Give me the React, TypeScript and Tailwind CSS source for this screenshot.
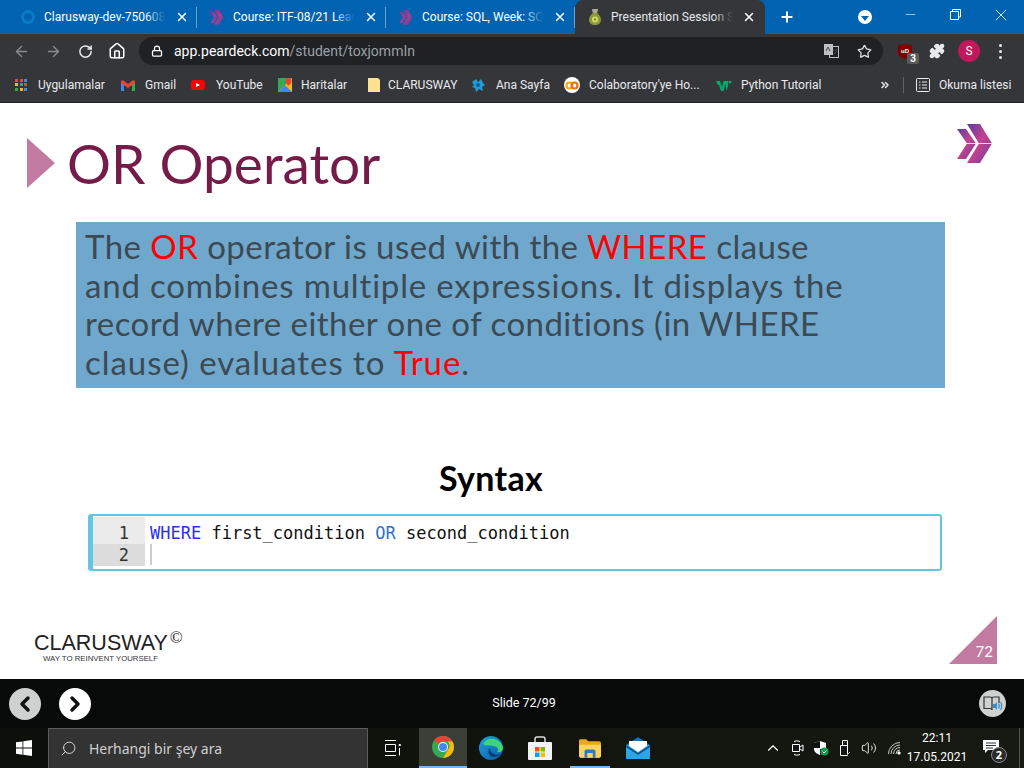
import React from 'react'
import {
  ArrowLeft,
  ArrowRight,
  RotateCw,
  Home,
  Lock,
  Star,
  Puzzle,
  X,
  Plus,
  Minus,
  ChevronLeft,
  ChevronRight,
  ChevronUp,
  ChevronsRight,
  Search,
  Volume2,
} from 'lucide-react'

const UI = { fontFamily: 'Roboto, "Open Sans", sans-serif' }
const SEGOE = { fontFamily: '"Noto Sans", "Open Sans", sans-serif' }
const SLIDE = { fontFamily: 'Lato, "Noto Sans", sans-serif' }
const LOGO = { fontFamily: '"Liberation Sans", sans-serif' }

// the two chevrons of the course logo, a white hairline runs through the middle
const Chevrons = ({ width, height, id, muted }: { width: number; height: number; id: string; muted?: boolean }) => (
  <svg width={width} height={height} viewBox="0 0 36 40">
    <defs>
      <linearGradient id={id} x1="0" y1="0" x2="1" y2="1">
        <stop offset="0" stopColor={muted ? '#6f3f9a' : '#5b3f9e'} />
        <stop offset="0.5" stopColor={muted ? '#a33f92' : '#c6408f'} />
        <stop offset="1" stopColor={muted ? '#6f3f9a' : '#6a3fa0'} />
      </linearGradient>
    </defs>
    <path d="M0 5h9l10 14.500L9 35H0l10-15.500z" fill={`url(#${id})`} />
    <path d="M10 0h13l12 19.500L23 39H10l12-19.500z" fill={`url(#${id})`} />
    {!muted && <path d="M2 19.500h33" stroke="white" strokeWidth="0.8" />}
  </svg>
)

const Tab = ({ icon, title }: { icon: React.ReactNode; title: string }) => (
  <div className="flex items-center w-[189px] h-[34px] pl-[13px] shrink-0 border-r border-[#5d93c4] [border-image:linear-gradient(transparent_22%,#6f9fcc_22%,#6f9fcc_80%,transparent_80%)_1]">
    <div className="flex items-center w-[23px] shrink-0">{icon}</div>
    <div className="relative w-[121px] overflow-hidden whitespace-nowrap text-[12px] text-white">
      {title}
      <div className="absolute right-0 top-0 bottom-0 w-5 bg-gradient-to-r from-transparent to-[#0063b1]" />
    </div>
    <X size={14} strokeWidth={2.5} className="ml-[10px] text-white shrink-0" />
  </div>
)

const TabStrip = () => (
  <div className="flex items-end h-[34px] bg-[#0063b1] pl-[8px] shrink-0" style={UI}>
    <Tab
      title="Clarusway-dev-750608"
      icon={<span className="w-[14px] h-[14px] rounded-full border-[3px] border-[#0a7cc4]" />}
    />
    <Tab title="Course: ITF-08/21 Learn" icon={<Chevrons id="t1" width={14} height={15} muted />} />
    <Tab title="Course: SQL, Week: SQL" icon={<Chevrons id="t2" width={14} height={15} muted />} />
    <div className="flex items-center w-[190px] h-[34px] bg-[#35363a] rounded-t-lg pl-[14px] shrink-0">
      <svg width="12" height="16" viewBox="0 0 12 16" className="shrink-0">
        <path d="M3 0h6L8 4c2 1.500 4 4 4 7 0 3-2.500 5-6 5s-6-2-6-5c0-3 2-5.500 4-7z" fill="#8d9a3a" />
        <path d="M3 0h6L8 4H4z" fill="#a8a89a" />
        <circle cx="6" cy="10.500" r="3" fill="#d8dc62" />
        <circle cx="6" cy="10.500" r="1" fill="#5c6424" />
      </svg>
      <div className="relative w-[122px] ml-[10px] overflow-hidden whitespace-nowrap text-[12px] text-[#e8eaed]">
        Presentation Session Student
        <div className="absolute right-0 top-0 bottom-0 w-5 bg-gradient-to-r from-transparent to-[#35363a]" />
      </div>
      <X size={14} strokeWidth={2.5} className="ml-[9px] text-white shrink-0" />
    </div>
    <div className="flex items-center h-[34px] flex-1">
      <Plus size={16} strokeWidth={3} className="ml-[14px] text-white" />
      <div className="flex items-center justify-center w-[14px] h-[14px] rounded-full bg-white ml-[63px]">
        <span className="w-0 h-0 mt-[2px] border-x-[4px] border-x-transparent border-t-[5px] border-t-[#0063b1]" />
      </div>
      <Minus size={15} strokeWidth={1} className="ml-[31px] -mt-[5px] text-white" />
      <svg width="11" height="11" viewBox="0 0 11 11" className="ml-[32px] -mt-[5px] text-white" fill="none" stroke="currentColor">
        <path d="M.5 2.500h8v8h-8zM2.500 2V.5h8V8H9" />
      </svg>
      <X size={20} strokeWidth={1} className="ml-[30px] -mt-[5px] text-white" />
    </div>
  </div>
)

const Toolbar = () => (
  <div className="flex items-center h-[34px] bg-[#35363a] shrink-0">
    <ArrowLeft size={17} className="ml-[13px] text-[#8a8b8d]" />
    <ArrowRight size={17} className="ml-[15px] text-[#8a8b8d]" />
    <RotateCw size={15} strokeWidth={2.4} className="ml-[16px] text-[#e8eaed]" />
    <Home size={18} strokeWidth={2} className="ml-[15px] text-white" />
    <div className="flex items-center w-[744px] h-[28px] ml-[13px] rounded-full bg-[#202124] text-[14px]" style={UI}>
      <Lock size={12} strokeWidth={2.5} className="ml-[12px] text-white" />
      <span className="ml-[11px] text-white">app.peardeck.com</span>
      <span className="text-[#9aa0a6]">/student/toxjommIn</span>
      <svg width="15" height="14" viewBox="0 0 15 14" className="ml-auto">
        <rect width="9" height="11" fill="#bdc1c6" />
        <rect x="5.500" y="2.500" width="9" height="11" fill="#202124" stroke="#bdc1c6" />
        <rect x="5.500" y="2.500" width="3.500" height="8.500" fill="#bdc1c6" />
        <path d="M2 7l2-4 2 4M9 6h4M10 10l3-3" stroke="#45474b" fill="none" />
      </svg>
      <Star size={15} strokeWidth={2} className="ml-[18px] mr-[11px] text-[#dfe1e5]" />
    </div>
    <div className="relative ml-[15px] w-[14px] h-[14px]">
      <svg width="14" height="15" viewBox="0 0 14 15">
        <path d="M0 1.500L7 0l7 1.500V8c0 3-3 6-7 7-4-1-7-4-7-7z" fill="#800000" />
      </svg>
      <span className="absolute left-[3px] top-[4px] text-[6px] font-bold leading-[7px] text-white" style={LOGO}>
        uD
      </span>
      <span className="absolute -right-[7px] top-[9px] flex items-center justify-center w-[12px] h-[11px] rounded-[2px] bg-[#5b5b5b] text-[10px] font-bold text-white" style={UI}>
        3
      </span>
    </div>
    <Puzzle size={16} fill="#e8eaed" className="ml-[17px] text-[#e8eaed]" />
    <div className="flex items-center justify-center w-[22px] h-[22px] ml-[13px] rounded-full bg-[#c2185b] text-[12px] text-white" style={UI}>
      S
    </div>
    <div className="flex flex-col gap-[3px] ml-[19px]">
      <span className="w-[3px] h-[3px] rounded-full bg-[#e8eaed]" />
      <span className="w-[3px] h-[3px] rounded-full bg-[#e8eaed]" />
      <span className="w-[3px] h-[3px] rounded-full bg-[#e8eaed]" />
    </div>
  </div>
)

const Bookmark = ({ icon, label, className }: { icon: React.ReactNode; label: string; className: string }) => (
  <div className={`flex items-center whitespace-nowrap ${className}`}>
    {icon}
    <span>{label}</span>
  </div>
)

const Bookmarks = () => (
  <div className="flex items-center h-[35px] bg-[#35363a] border-b border-[#202124] text-[12px] text-[#e8eaed] shrink-0" style={UI}>
    <Bookmark
      className="ml-[15px] w-[106px]"
      label="Uygulamalar"
      icon={
        <div className="grid grid-cols-3 gap-px w-[13px] h-[13px] mr-[10px]">
          {['#e8453c', '#e8453c', '#4285f4', '#fbbc05', '#34a853', '#e8453c', '#34a853', '#fbbc05', '#4285f4'].map((c, i) => (
            <span key={i} className="w-[3px] h-[3px]" style={{ background: c }} />
          ))}
        </div>
      }
    />
    <Bookmark
      className="w-[70px]"
      label="Gmail"
      icon={
        <svg width="14" height="11" viewBox="0 0 14 11" className="mr-[10px]">
          <path d="M0 11V1l3 2v8z" fill="#4285f4" />
          <path d="M14 11V1l-3 2v8z" fill="#34a853" />
          <path d="M0 1c1-1 2-1 3 0l4 3 4-3c1-1 2-1 3 0v2l-7 5-7-5z" fill="#ea4335" />
        </svg>
      }
    />
    <Bookmark
      className="w-[87px]"
      label="YouTube"
      icon={
        <div className="flex items-center justify-center w-[14px] h-[10px] mr-[11px] rounded-[3px] bg-[#f00]">
          <span className="w-0 h-0 border-y-[2.5px] border-y-transparent border-l-[4px] border-l-white" />
        </div>
      }
    />
    <Bookmark
      className="w-[86px]"
      label="Haritalar"
      icon={
        <svg width="14" height="14" viewBox="0 0 14 14" className="mr-[9px]">
          <rect width="14" height="14" fill="#34a853" />
          <path d="M0 14L14 0v14z" fill="#fbbc05" />
          <path d="M0 14l7-7 7 7z" fill="#4285f4" />
          <path d="M10.500 0a3 3 0 0 1 3 3c0 2-3 5-3 5s-3-3-3-5a3 3 0 0 1 3-3z" fill="#ea4335" />
        </svg>
      }
    />
    <Bookmark
      className="w-[107px] pl-[4px]"
      label="CLARUSWAY"
      icon={
        <svg width="12" height="14" viewBox="0 0 12 14" className="mr-[8px]">
          <path d="M0 0h10l2 2v12H0z" fill="#fde293" />
        </svg>
      }
    />
    <Bookmark
      className="w-[93px]"
      label="Ana Sayfa"
      icon={
        <svg width="15" height="15" viewBox="0 0 15 15" className="mr-[10px]">
          <path d="M1 4l4-3 2 3 3-3 2 4 2 2-3 2 1 4-4-2-3 3-1-4-3-1 2-2z" fill="#1f9bd7" />
          <circle cx="7" cy="7" r="2" fill="#0e5f8c" />
        </svg>
      }
    />
    <Bookmark
      className="w-[152px]"
      label="Colaboratory'ye Ho..."
      icon={
        <div className="flex items-center justify-center w-[16px] h-[16px] mr-[9px] rounded-full bg-white shrink-0">
          <svg width="14" height="9" viewBox="0 0 14 9" fill="none" strokeWidth="2.2">
            <circle cx="4.500" cy="4.500" r="3" stroke="#f9ab00" />
            <circle cx="9.500" cy="4.500" r="3" stroke="#e8710a" />
          </svg>
        </div>
      }
    />
    <Bookmark
      className="w-[163px]"
      label="Python Tutorial"
      icon={
        <svg width="16" height="11" viewBox="0 0 16 11" className="mr-[9px]">
          <path d="M0 1h4l2 6 1.500-6h3l-3 10H5L3 5l-1 0z" fill="#04aa6d" />
          <path d="M9 1h3v5l-1.500 5z" fill="#04aa6d" />
          <circle cx="14" cy="2" r="1.500" fill="#04aa6d" />
        </svg>
      }
    />
    <ChevronsRight size={12} strokeWidth={3} className="text-[#e8eaed]" />
    <div className="w-px h-[16px] ml-[12px] bg-[#5f6368]" />
    <svg width="14" height="14" viewBox="0 0 14 14" className="ml-[12px] mr-[9px]" fill="none" stroke="#e8eaed">
      <rect x="0.5" y="0.5" width="13" height="13" rx="1" />
      <path d="M3 4h1.500M6 4h5M3 7h1.500M6 7h5M3 10h1.500M6 10h5" />
    </svg>
    <span className="whitespace-nowrap">Okuma listesi</span>
  </div>
)

const Red = ({ children }: { children: React.ReactNode }) => <span className="text-[#ff0000]">{children}</span>

const Slide = () => (
  <div className="flex-1 flex flex-col bg-white min-h-0" style={SLIDE}>
    <div className="flex items-start h-[119px] pl-[27px] pt-[35px] pr-[31px]">
      <div className="w-0 h-0 border-y-[25px] border-y-transparent border-l-[28px] border-l-[#c27ba0]" />
      <h1 className="ml-[12px] -mt-[7px] text-[55px] leading-[64px] text-[#741b47]">OR Operator</h1>
      <div className="ml-auto -mt-[14px]">
        <Chevrons id="logo" width={36} height={40} />
      </div>
    </div>
    <div className="ml-[76px] w-[869px] h-[166px] bg-[#6fa8cc] pl-[9px] pt-[5px] text-[33px] leading-[38.7px] text-[#3b4a54] whitespace-nowrap">
      <div className="tracking-[0.45px]">
        The <Red>OR</Red> operator is used with the <Red>WHERE</Red> clause
      </div>
      <div className="tracking-[0.82px]">and combines multiple expressions. It displays the</div>
      <div className="tracking-[0.46px]">record where either one of conditions (in WHERE</div>
      <div className="tracking-[0.95px]">
        clause) evaluates to <Red>True</Red>.
      </div>
    </div>
    <div className="mt-[68px] ml-[88px] w-[806px] text-center text-[34px] font-bold leading-[44px] tracking-[0.3px] text-black">
      Syntax
    </div>
    <div className="flex ml-[88px] mt-[14px] w-[854px] h-[57px] rounded-[3px] border-2 border-l-[5px] border-[#65c6e3] bg-white leading-[22px]" style={{ fontFamily: '"DejaVu Sans Mono", monospace' }}>
      <div className="flex flex-col w-[52px] mt-[1px] text-[17px] text-[#333] text-right">
        <div className="h-[27px] pt-[5px] pr-[16px] bg-[#ebebeb]">1</div>
        <div className="h-[22px] pr-[16px] bg-[#dcdcdc]">2</div>
      </div>
      <div className="flex flex-col pl-[5px] pt-[6px]">
        <div className="text-[17px] whitespace-nowrap text-[#111]">
          <span className="text-[#3030f0]">WHERE</span> first_condition <span className="text-[#3070d0]">OR</span> second_condition
        </div>
        <div className="w-[2px] h-[21px] bg-[#ccc]" />
      </div>
    </div>
    <div className="flex items-end justify-between mt-auto pl-[34px] pr-[27px] pb-[15px]">
      <div>
        <div className="flex items-start text-[21.5px] leading-[24px] text-[#222]" style={LOGO}>
          CLARUSWAY
          <span className="ml-[2px] text-[17px] leading-[18px] -mt-[2px]" style={{ fontFamily: '"Liberation Serif", serif' }}>©</span>
        </div>
        <div className="ml-[9px] -mt-px text-[7.8px] leading-[10px] text-[#333]" style={LOGO}>
          WAY TO REINVENT YOURSELF
        </div>
      </div>
      <div className="relative w-[48px] h-[48px] [clip-path:polygon(100%_0,100%_100%,0_100%)] bg-[#c27ba0]">
        <span className="absolute right-[4px] bottom-[5px] text-[15px] leading-[16px] text-white">72</span>
      </div>
    </div>
  </div>
)

const DeckBar = () => (
  <div className="flex items-center h-[49px] bg-[#080a0a] pl-[9px] pr-[18px] shrink-0">
    <div className="flex items-center justify-center w-[32px] h-[32px] rounded-full bg-[#cfd0d0]">
      <ChevronLeft size={24} strokeWidth={3.5} className="text-[#111]" />
    </div>
    <div className="flex items-center justify-center w-[32px] h-[32px] ml-[18px] rounded-full bg-white">
      <ChevronRight size={24} strokeWidth={3.5} className="text-[#111]" />
    </div>
    <div className="flex-1 pr-[22px] text-center text-[12.500px] text-white" style={UI}>
      Slide 72/99
    </div>
    <div className="flex items-center justify-center w-[27px] h-[27px] rounded-full bg-[#cfd0d0]">
      <svg width="20" height="17" viewBox="0 0 20 17" fill="none" strokeWidth="1.2">
        <path d="M1 2h6c1 0 2 .5 2 1.500V15c0-1-1-1.500-2-1.500H1zM9 3.500C9 2.500 10 2 11 2h5v6" stroke="#333" />
        <path d="M10 9h2l2-2v8l-2-2h-2z" fill="#3a8fd0" />
        <path d="M15.500 8.500c1 1.500 1 3.500 0 5M17.500 7c1.500 2 1.500 6 0 8" stroke="#3a8fd0" />
      </svg>
    </div>
  </div>
)

const TaskIcon = ({ children, className = '' }: { children: React.ReactNode; className?: string }) => (
  <div className={`relative flex items-center justify-center w-[48px] h-[40px] shrink-0 ${className}`}>{children}</div>
)

const Taskbar = () => (
  <div className="flex items-center h-[40px] bg-gradient-to-r from-[#0c0f0a] via-[#10140c] to-[#171a12] shrink-0 text-white" style={SEGOE}>
    <div className="flex items-center justify-center w-[48px] h-[40px] shrink-0">
      <svg width="16" height="16" viewBox="0 0 16 16" fill="white">
        <path d="M0 2.300l6.500-.9v6.200H0zM7.300 1.300L16 0v7.600H7.300zM0 8.400h6.500v6.300L0 13.800zM7.300 8.400H16V16l-8.700-1.200z" />
      </svg>
    </div>
    <div className="flex items-center w-[320px] h-[40px] bg-[#333] border border-[#5c5c5c] border-b-0 shrink-0">
      <Search size={17} strokeWidth={1.3} className="ml-[11px] -scale-x-100 text-[#ddd]" />
      <span className="ml-[12px] text-[14px] text-[#d0d0d0]">Herhangi bir şey ara</span>
    </div>
    <TaskIcon className="ml-[1px]">
      <svg width="16" height="16" viewBox="0 0 16 16" fill="none" stroke="white">
        <path d="M0 .5h11M0 15.500h11M.5 4.500h10v7H.5zM14 4.500h1.500v1H14zM14.500 8v7.500" />
      </svg>
    </TaskIcon>
    <TaskIcon className="ml-[2px] bg-[#3a3f38] border-b-2 border-[#76b9ed]">
      <svg width="24" height="24" viewBox="0 0 24 24">
        <circle cx="12" cy="12" r="11" fill="#34a853" />
        <path d="M12 1a11 11 0 0 1 9.500 5.500H12a5.500 5.500 0 0 0-5 3.300L3.500 4.700A11 11 0 0 1 12 1z" fill="#ea4335" />
        <path d="M21.500 6.500A11 11 0 0 1 12 23l5-8.300a5.500 5.500 0 0 0-.5-8.200z" fill="#fbbc05" />
        <circle cx="12" cy="12" r="5" fill="white" />
        <circle cx="12" cy="12" r="4" fill="#4285f4" />
      </svg>
    </TaskIcon>
    <TaskIcon>
      <svg width="24" height="24" viewBox="0 0 24 24">
        <defs>
          <linearGradient id="edge" x1="0" y1="0" x2="1" y2="1">
            <stop offset="0" stopColor="#1ba3dc" />
            <stop offset="1" stopColor="#0c59a4" />
          </linearGradient>
        </defs>
        <circle cx="12" cy="12" r="12" fill="url(#edge)" />
        <path d="M4 8c3-7 16-8 20 3 .5 4-3 6-6 5 2-2 1-5-3-6-5-1-9 0-11-2z" fill="#3fd47a" />
        <path d="M11 12c-3 2-2 8 3 9 3 .5 6-1 8-3-4 2-11 0-11-6z" fill="#0b3f7c" />
      </svg>
    </TaskIcon>
    <TaskIcon className="ml-[1px]">
      <svg width="24" height="24" viewBox="0 0 24 24">
        <path d="M7 6V3c0-1 1-2 2-2h6c1 0 2 1 2 2v3" fill="none" stroke="#ddd" strokeWidth="1.500" />
        <rect y="6" width="24" height="18" rx="1" fill="#f3f3f3" />
        <rect x="7" y="11" width="4.500" height="4.500" fill="#f25022" />
        <rect x="12.500" y="11" width="4.500" height="4.500" fill="#7fba00" />
        <rect x="7" y="16.500" width="4.500" height="4.500" fill="#00a4ef" />
        <rect x="12.500" y="16.500" width="4.500" height="4.500" fill="#ffb900" />
      </svg>
    </TaskIcon>
    <TaskIcon className="ml-[2px]">
      <svg width="22" height="19" viewBox="0 0 24 20">
        <path d="M0 2c0-1 .5-2 1.500-2H8l2 2h12c1 0 2 1 2 2v14c0 1-1 2-2 2H2c-1 0-2-1-2-2z" fill="#e8a920" />
        <path d="M0 6h24v12c0 1-1 2-2 2H2c-1 0-2-1-2-2z" fill="#fbd55b" />
        <path d="M6 20v-7c0-1 1-2 2-2h8c1 0 2 1 2 2v7h-3v-5H9v5z" fill="#2f7dc0" />
      </svg>
      <span className="absolute left-[4px] right-[4px] bottom-0 h-[2px] bg-[#76b9ed]" />
    </TaskIcon>
    <TaskIcon>
      <svg width="24" height="22" viewBox="0 0 24 22">
        <path d="M0 8L12 0l12 8v13c0 .5-.5 1-1 1H1c-.5 0-1-.5-1-1z" fill="#0a73c5" />
        <path d="M0 8h24v13c0 .5-.5 1-1 1H1c-.5 0-1-.5-1-1z" fill="#28a8ea" />
        <path d="M0 8l12 8 12-8v2L12 18 0 10z" fill="#0d4f87" />
        <path d="M3 4h18v5l-9 6-9-6z" fill="white" />
      </svg>
    </TaskIcon>
    <ChevronUp size={18} strokeWidth={1.500} className="ml-[102px] text-white" />
    <svg width="12" height="16" viewBox="0 0 12 16" fill="none" stroke="white" className="ml-[10px]">
      <path d="M2 1.500a7 7 0 0 1 6 0M2 14.500a7 7 0 0 0 6 0M.5 4.500h7v7h-7zM8 7l3-2v6l-3-2" />
    </svg>
    <svg width="15" height="15" viewBox="0 0 15 15" className="ml-[10px]">
      <path d="M0 2l6-2 6 2v6c0 3-3 5-6 6-3-1-6-3-6-6z" fill="white" />
      <path d="M6 0v7H0V2zM12 8H6v6c3-1 6-3 6-6z" fill="#111" />
      <circle cx="10.500" cy="10.500" r="4" fill="#129c49" />
      <path d="M8.500 10.500l1.500 1.500 2.500-2.500" stroke="white" fill="none" />
    </svg>
    <svg width="11" height="16" viewBox="0 0 11 16" fill="none" stroke="white" className="ml-[11px]">
      <path d="M2.500.5h5v5h-5zM.5 5.500h7v10h-7z" />
      <path d="M4 2.500h.5M6 2.500h.5M7 15l3-3" stroke="#999" />
    </svg>
    <Volume2 size={16} strokeWidth={1.300} className="ml-[10px] text-white" />
    <svg width="13" height="13" viewBox="0 0 13 13" fill="none" stroke="white" className="ml-[11px]">
      <path d="M.5 12A11.500 11.500 0 0 1 12 .5M3 12a9 9 0 0 1 9-9M5.500 12A6.500 6.500 0 0 1 12 5.500M8 12a4 4 0 0 1 4-4" stroke="#ccc" />
      <circle cx="11" cy="11" r="1.200" fill="white" />
    </svg>
    <div className="flex flex-col items-center w-[68px] ml-[2px] text-[12px] leading-[19px]" style={UI}>
      <span>22:11</span>
      <span className="whitespace-nowrap">17.05.2021</span>
    </div>
    <div className="relative ml-[12px] w-[16px] h-[14px]">
      <svg width="16" height="14" viewBox="0 0 16 14" className="-mt-px">
        <path d="M0 0h16v10H5l-3 3v-3H0z" fill="white" />
        <path d="M3 3h10M3 5.500h10M3 8h7" stroke="#333" />
      </svg>
      <span className="absolute left-[8px] top-[6px] flex items-center justify-center w-[16px] h-[16px] rounded-full bg-[#2b2b2b] border border-[#888] text-[11px] font-bold text-white">
        2
      </span>
    </div>
    <div className="ml-auto mr-[4px] w-px h-[40px] bg-[#555]" />
  </div>
)

export default function App() {
  return (
    <div className="flex flex-col w-[1024px] h-[768px] overflow-hidden">
      <TabStrip />
      <Toolbar />
      <Bookmarks />
      <Slide />
      <DeckBar />
      <Taskbar />
    </div>
  )
}
